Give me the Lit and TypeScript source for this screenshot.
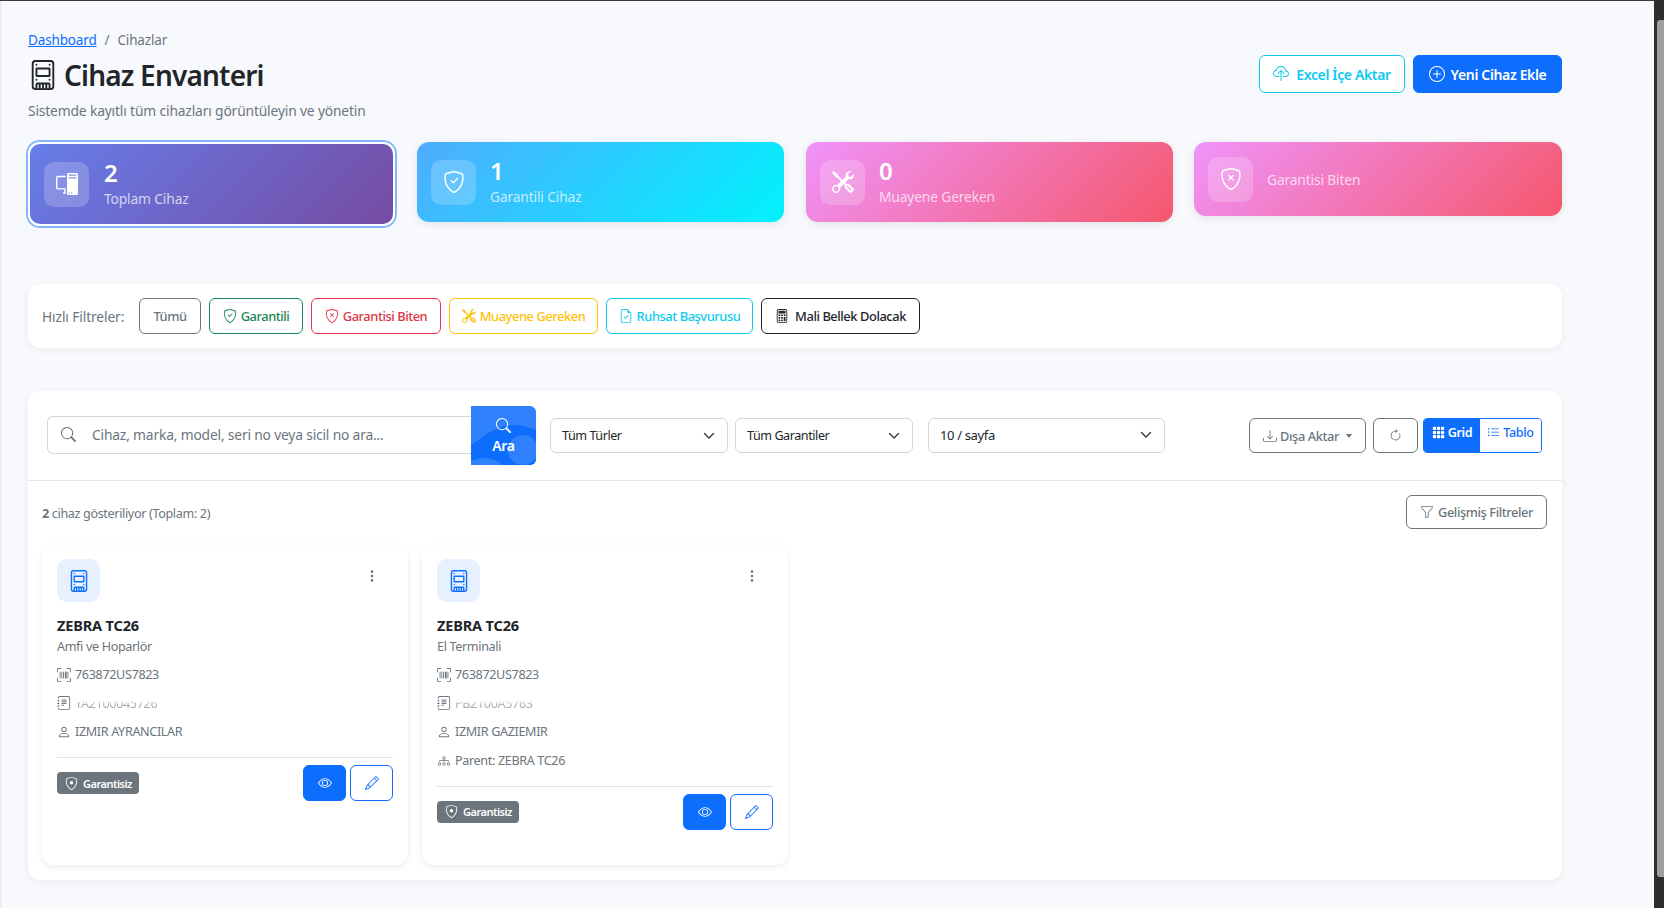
import { LitElement, html, css } from "lit";
import { customElement } from "lit/decorators.js";
import { unsafeSVG } from "lit/directives/unsafe-svg.js";

const SHIELD = `<path d="M5.338 1.59a61.44 61.44 0 0 0-2.837.856.481.481 0 0 0-.328.39c-.554 4.157.726 7.19 2.253 9.188a10.725 10.725 0 0 0 2.287 2.233c.346.244.652.42.893.533.12.057.218.095.293.118a.55.55 0 0 0 .101.025.615.615 0 0 0 .1-.025c.076-.023.174-.061.294-.118.24-.113.547-.29.893-.533a10.726 10.726 0 0 0 2.287-2.233c1.527-1.997 2.807-5.031 2.253-9.188a.48.48 0 0 0-.328-.39c-.651-.213-1.75-.56-2.837-.855C9.552 1.29 8.531 1.067 8 1.067c-.53 0-1.552.223-2.662.524zM5.072.56C6.157.265 7.31 0 8 0s1.843.265 2.928.56c1.11.3 2.229.655 2.887.87a1.54 1.54 0 0 1 1.044 1.262c.596 4.477-.787 7.795-2.465 9.99a11.775 11.775 0 0 1-2.517 2.453 7.159 7.159 0 0 1-1.048.625c-.28.132-.581.24-.829.24s-.548-.108-.829-.24a7.158 7.158 0 0 1-1.048-.625 11.777 11.777 0 0 1-2.517-2.453C1.928 10.487.545 7.169 1.141 2.692A1.54 1.54 0 0 1 2.185 1.43 62.456 62.456 0 0 1 5.072.56z"/>`;

const ICONS: Record<string, string> = {
  ssd: `<path d="M4.75 4a.75.75 0 0 0-.75.75v3.5c0 .414.336.75.75.75h6.5a.75.75 0 0 0 .75-.75v-3.5a.75.75 0 0 0-.75-.75h-6.5ZM5 8V5h6v3H5Zm0-5.5a.5.5 0 1 1-1 0 .5.5 0 0 1 1 0Zm7 0a.5.5 0 1 1-1 0 .5.5 0 0 1 1 0ZM4.5 11a.5.5 0 1 0 0-1 .5.5 0 0 0 0 1Zm7 0a.5.5 0 1 0 0-1 .5.5 0 0 0 0 1Z"/><path d="M2 2a2 2 0 0 1 2-2h8a2 2 0 0 1 2 2v12a2 2 0 0 1-2 2H4a2 2 0 0 1-2-2V2Zm11 12V2a1 1 0 0 0-1-1H4a1 1 0 0 0-1 1v12a1 1 0 0 0 1 1v-2a1 1 0 0 1 1-1h6a1 1 0 0 1 1 1v2a1 1 0 0 0 1-1Zm-7.25 1v-2H5v2h.75Zm1.75 0v-2h-.75v2h.75Zm1.75 0v-2H8.5v2h.75ZM11 13h-.75v2H11v-2Z"/>`,
  upload: `<path fill-rule="evenodd" d="M4.406 1.342A5.53 5.53 0 0 1 8 0c2.69 0 4.923 2 5.166 4.579C14.758 4.804 16 6.137 16 7.773 16 9.569 14.502 11 12.687 11H10a.5.5 0 0 1 0-1h2.688C13.979 10 15 8.988 15 7.773c0-1.216-1.02-2.228-2.313-2.228h-.5v-.5C12.188 2.825 10.328 1 8 1a4.53 4.53 0 0 0-2.941 1.1c-.757.652-1.153 1.438-1.153 2.055v.448l-.445.049C2.064 4.805 1 5.952 1 7.318 1 8.785 2.23 10 3.781 10H6a.5.5 0 0 1 0 1H3.781C1.708 11 0 9.366 0 7.318c0-1.763 1.266-3.223 2.942-3.593.143-.863.698-1.723 1.464-2.383z"/><path fill-rule="evenodd" d="M7.646 4.146a.5.5 0 0 1 .708 0l3 3a.5.5 0 0 1-.708.708L8.5 5.707V14.5a.5.5 0 0 1-1 0V5.707L5.354 7.854a.5.5 0 1 1-.708-.708l3-3z"/>`,
  plus: `<path d="M8 15A7 7 0 1 1 8 1a7 7 0 0 1 0 14zm0 1A8 8 0 1 0 8 0a8 8 0 0 0 0 16z"/><path d="M8 4a.5.5 0 0 1 .5.5v3h3a.5.5 0 0 1 0 1h-3v3a.5.5 0 0 1-1 0v-3h-3a.5.5 0 0 1 0-1h3v-3A.5.5 0 0 1 8 4z"/>`,
  pc: `<path d="M8 1a1 1 0 0 1 1-1h6a1 1 0 0 1 1 1v14a1 1 0 0 1-1 1H9a1 1 0 0 1-1-1V1Zm1 13.5a.5.5 0 1 0 1 0 .5.5 0 0 0-1 0Zm2 0a.5.5 0 1 0 1 0 .5.5 0 0 0-1 0ZM9.5 1a.5.5 0 0 0 0 1h5a.5.5 0 0 0 0-1h-5ZM9 3.5a.5.5 0 0 0 .5.5h5a.5.5 0 0 0 0-1h-5a.5.5 0 0 0-.5.5ZM1.5 2A1.5 1.5 0 0 0 0 3.5v7A1.5 1.5 0 0 0 1.5 12H6v2h-.5a.5.5 0 0 0 0 1H7v-4H1.5a.5.5 0 0 1-.5-.5v-7a.5.5 0 0 1 .5-.5H7V2H1.5Z"/>`,
  shieldCheck: SHIELD + `<path d="M10.854 5.146a.5.5 0 0 1 0 .708l-3 3a.5.5 0 0 1-.708 0l-1.5-1.5a.5.5 0 1 1 .708-.708L7.5 7.793l2.646-2.647a.5.5 0 0 1 .708 0z"/>`,
  shieldX: SHIELD + `<path d="M6.146 5.146a.5.5 0 0 1 .708 0L8 6.293l1.146-1.147a.5.5 0 1 1 .708.708L8.707 7l1.147 1.146a.5.5 0 0 1-.708.708L8 7.707 6.854 8.854a.5.5 0 1 1-.708-.708L7.293 7 6.146 5.854a.5.5 0 0 1 0-.708z"/>`,
  shieldDot: SHIELD + `<circle cx="8" cy="7" r="2.1"/>`,
  tools: `<path d="M1 0 0 1l2.2 3.081a1 1 0 0 0 .815.419h.07a1 1 0 0 1 .708.293l2.675 2.675-2.617 2.654A3.003 3.003 0 0 0 0 13a3 3 0 1 0 5.878-.851l2.654-2.617.968.968-.305.914a1 1 0 0 0 .242 1.023l3.27 3.27a.997.997 0 0 0 1.414 0l1.586-1.586a.997.997 0 0 0 0-1.414l-3.27-3.27a1 1 0 0 0-1.023-.242L10.5 9.5l-.96-.96 2.68-2.643A3.005 3.005 0 0 0 16 3c0-.269-.035-.53-.102-.777l-2.14 2.141L12 4l-.364-1.757L13.777.102a3 3 0 0 0-3.675 3.68L7.462 6.46 4.793 3.793a1 1 0 0 1-.293-.707v-.071a1 1 0 0 0-.419-.814L1 0Zm9.646 10.646a.5.5 0 0 1 .708 0l2.914 2.915a.5.5 0 0 1-.707.707l-2.915-2.914a.5.5 0 0 1 0-.708ZM3 11l.471.242.529.026.287.445.445.287.026.529L5 13l-.242.471-.026.529-.445.287-.287.445-.529.026L3 15l-.471-.242L2 14.732l-.287-.445L1.268 14l-.026-.529L1 13l.242-.471.026-.529.445-.287.287-.445.529-.026L3 11Z"/>`,
  fileCheck: `<path d="M10.854 7.854a.5.5 0 0 0-.708-.708L7.5 9.793 6.354 8.646a.5.5 0 1 0-.708.708l1.5 1.5a.5.5 0 0 0 .708 0l3-3z"/><path d="M14 14V4.5L9.5 0H4a2 2 0 0 0-2 2v12a2 2 0 0 0 2 2h8a2 2 0 0 0 2-2zM9.5 3A1.5 1.5 0 0 0 11 4.5h2V14a1 1 0 0 1-1 1H4a1 1 0 0 1-1-1V2a1 1 0 0 1 1-1h5.5v2z"/>`,
  calc: `<path d="M12 1a1 1 0 0 1 1 1v12a1 1 0 0 1-1 1H4a1 1 0 0 1-1-1V2a1 1 0 0 1 1-1h8zM4 0a2 2 0 0 0-2 2v12a2 2 0 0 0 2 2h8a2 2 0 0 0 2-2V2a2 2 0 0 0-2-2H4z"/><path d="M4 2.5a.5.5 0 0 1 .5-.5h7a.5.5 0 0 1 .5.5v2a.5.5 0 0 1-.5.5h-7a.5.5 0 0 1-.5-.5v-2zm0 4a.5.5 0 0 1 .5-.5h1a.5.5 0 0 1 .5.5v1a.5.5 0 0 1-.5.5h-1a.5.5 0 0 1-.5-.5v-1zm0 3a.5.5 0 0 1 .5-.5h1a.5.5 0 0 1 .5.5v1a.5.5 0 0 1-.5.5h-1a.5.5 0 0 1-.5-.5v-1zm0 3a.5.5 0 0 1 .5-.5h1a.5.5 0 0 1 .5.5v1a.5.5 0 0 1-.5.5h-1a.5.5 0 0 1-.5-.5v-1zm3-6a.5.5 0 0 1 .5-.5h1a.5.5 0 0 1 .5.5v1a.5.5 0 0 1-.5.5h-1a.5.5 0 0 1-.5-.5v-1zm0 3a.5.5 0 0 1 .5-.5h1a.5.5 0 0 1 .5.5v1a.5.5 0 0 1-.5.5h-1a.5.5 0 0 1-.5-.5v-1zm0 3a.5.5 0 0 1 .5-.5h1a.5.5 0 0 1 .5.5v1a.5.5 0 0 1-.5.5h-1a.5.5 0 0 1-.5-.5v-1zm3-6a.5.5 0 0 1 .5-.5h1a.5.5 0 0 1 .5.5v1a.5.5 0 0 1-.5.5h-1a.5.5 0 0 1-.5-.5v-1zm0 3a.5.5 0 0 1 .5-.5h1a.5.5 0 0 1 .5.5v4a.5.5 0 0 1-.5.5h-1a.5.5 0 0 1-.5-.5v-4z"/>`,
  search: `<path d="M11.742 10.344a6.5 6.5 0 1 0-1.397 1.398h-.001c.03.04.062.078.098.115l3.85 3.85a1 1 0 0 0 1.415-1.414l-3.85-3.85a1.007 1.007 0 0 0-.115-.1zM12 6.5a5.5 5.5 0 1 1-11 0 5.5 5.5 0 0 1 11 0z"/>`,
  download: `<path d="M.5 9.9a.5.5 0 0 1 .5.5v2.5a1 1 0 0 0 1 1h12a1 1 0 0 0 1-1v-2.5a.5.5 0 0 1 1 0v2.5a2 2 0 0 1-2 2H2a2 2 0 0 1-2-2v-2.5a.5.5 0 0 1 .5-.5z"/><path d="M7.646 11.854a.5.5 0 0 0 .708 0l3-3a.5.5 0 0 0-.708-.708L8.5 10.293V1.5a.5.5 0 0 0-1 0v8.793L5.354 8.146a.5.5 0 1 0-.708.708l3 3z"/>`,
  refresh: `<path fill-rule="evenodd" d="M8 3a5 5 0 1 0 4.546 2.914.5.5 0 0 1 .908-.417A6 6 0 1 1 8 2v1z"/><path d="M8 4.466V.534a.25.25 0 0 1 .41-.192l2.36 1.966c.12.1.12.284 0 .384L8.41 4.658A.25.25 0 0 1 8 4.466z"/>`,
  grid: `<path d="M1 2a1 1 0 0 1 1-1h2a1 1 0 0 1 1 1v2a1 1 0 0 1-1 1H2a1 1 0 0 1-1-1V2zm5 0a1 1 0 0 1 1-1h2a1 1 0 0 1 1 1v2a1 1 0 0 1-1 1H7a1 1 0 0 1-1-1V2zm5 0a1 1 0 0 1 1-1h2a1 1 0 0 1 1 1v2a1 1 0 0 1-1 1h-2a1 1 0 0 1-1-1V2zM1 7a1 1 0 0 1 1-1h2a1 1 0 0 1 1 1v2a1 1 0 0 1-1 1H2a1 1 0 0 1-1-1V7zm5 0a1 1 0 0 1 1-1h2a1 1 0 0 1 1 1v2a1 1 0 0 1-1 1H7a1 1 0 0 1-1-1V7zm5 0a1 1 0 0 1 1-1h2a1 1 0 0 1 1 1v2a1 1 0 0 1-1 1h-2a1 1 0 0 1-1-1V7zM1 12a1 1 0 0 1 1-1h2a1 1 0 0 1 1 1v2a1 1 0 0 1-1 1H2a1 1 0 0 1-1-1v-2zm5 0a1 1 0 0 1 1-1h2a1 1 0 0 1 1 1v2a1 1 0 0 1-1 1H7a1 1 0 0 1-1-1v-2zm5 0a1 1 0 0 1 1-1h2a1 1 0 0 1 1 1v2a1 1 0 0 1-1 1h-2a1 1 0 0 1-1-1v-2z"/>`,
  list: `<path fill-rule="evenodd" d="M5 11.5a.5.5 0 0 1 .5-.5h9a.5.5 0 0 1 0 1h-9a.5.5 0 0 1-.5-.5zm0-4a.5.5 0 0 1 .5-.5h9a.5.5 0 0 1 0 1h-9a.5.5 0 0 1-.5-.5zm0-4a.5.5 0 0 1 .5-.5h9a.5.5 0 0 1 0 1h-9a.5.5 0 0 1-.5-.5zm-3 1a1 1 0 1 0 0-2 1 1 0 0 0 0 2zm0 4a1 1 0 1 0 0-2 1 1 0 0 0 0 2zm0 4a1 1 0 1 0 0-2 1 1 0 0 0 0 2z"/>`,
  funnel: `<path d="M1.5 1.5A.5.5 0 0 1 2 1h12a.5.5 0 0 1 .5.5v2a.5.5 0 0 1-.128.334L10 8.692V13.5a.5.5 0 0 1-.342.474l-3 1A.5.5 0 0 1 6 14.5V8.692L1.628 3.834A.5.5 0 0 1 1.5 3.5v-2zm1 .5v1.308l4.372 4.858A.5.5 0 0 1 7 8.5v5.306l2-.666V8.5a.5.5 0 0 1 .128-.334L13.5 3.308V2h-11z"/>`,
  dots: `<path d="M9.5 13a1.5 1.5 0 1 1-3 0 1.5 1.5 0 0 1 3 0zm0-5a1.5 1.5 0 1 1-3 0 1.5 1.5 0 0 1 3 0zm0-5a1.5 1.5 0 1 1-3 0 1.5 1.5 0 0 1 3 0z"/>`,
  upc: `<path d="M1.5 1a.5.5 0 0 0-.5.5v3a.5.5 0 0 1-1 0v-3A1.5 1.5 0 0 1 1.5 0h3a.5.5 0 0 1 0 1h-3zM11 .5a.5.5 0 0 1 .5-.5h3A1.5 1.5 0 0 1 16 1.5v3a.5.5 0 0 1-1 0v-3a.5.5 0 0 0-.5-.5h-3a.5.5 0 0 1-.5-.5zM.5 11a.5.5 0 0 1 .5.5v3a.5.5 0 0 0 .5.5h3a.5.5 0 0 1 0 1h-3A1.5 1.5 0 0 1 0 14.5v-3a.5.5 0 0 1 .5-.5zm15 0a.5.5 0 0 1 .5.5v3a1.5 1.5 0 0 1-1.5 1.5h-3a.5.5 0 0 1 0-1h3a.5.5 0 0 0 .5-.5v-3a.5.5 0 0 1 .5-.5zM3 4.5a.5.5 0 0 1 1 0v7a.5.5 0 0 1-1 0v-7zm2 0a.5.5 0 0 1 1 0v7a.5.5 0 0 1-1 0v-7zm2 0a.5.5 0 0 1 1 0v7a.5.5 0 0 1-1 0v-7zm2 0a.5.5 0 0 1 .5-.5h1a.5.5 0 0 1 .5.5v7a.5.5 0 0 1-.5.5h-1a.5.5 0 0 1-.5-.5v-7zm3 0a.5.5 0 0 1 1 0v7a.5.5 0 0 1-1 0v-7z"/>`,
  journal: `<path d="M5 10.5a.5.5 0 0 1 .5-.5h2a.5.5 0 0 1 0 1h-2a.5.5 0 0 1-.5-.5zm0-2a.5.5 0 0 1 .5-.5h5a.5.5 0 0 1 0 1h-5a.5.5 0 0 1-.5-.5zm0-2a.5.5 0 0 1 .5-.5h5a.5.5 0 0 1 0 1h-5a.5.5 0 0 1-.5-.5zm0-2a.5.5 0 0 1 .5-.5h5a.5.5 0 0 1 0 1h-5a.5.5 0 0 1-.5-.5z"/><path d="M3 0h10a2 2 0 0 1 2 2v12a2 2 0 0 1-2 2H3a2 2 0 0 1-2-2v-1h1v1a1 1 0 0 0 1 1h10a1 1 0 0 0 1-1V2a1 1 0 0 0-1-1H3a1 1 0 0 0-1 1v1H1V2a2 2 0 0 1 2-2z"/><path d="M1 5v-.5a.5.5 0 0 1 1 0V5h.5a.5.5 0 0 1 0 1h-2a.5.5 0 0 1 0-1H1zm0 3v-.5a.5.5 0 0 1 1 0V8h.5a.5.5 0 0 1 0 1h-2a.5.5 0 0 1 0-1H1zm0 3v-.5a.5.5 0 0 1 1 0v.5h.5a.5.5 0 0 1 0 1h-2a.5.5 0 0 1 0-1H1z"/>`,
  person: `<path d="M8 8a3 3 0 1 0 0-6 3 3 0 0 0 0 6Zm2-3a2 2 0 1 1-4 0 2 2 0 0 1 4 0Zm4 8c0 1-1 1-1 1H3s-1 0-1-1 1-4 6-4 6 3 6 4Zm-1-.004c-.001-.246-.154-.986-.832-1.664C11.516 10.68 10.289 10 8 10c-2.29 0-3.516.68-4.168 1.332-.678.678-.83 1.418-.832 1.664h10Z"/>`,
  diagram: `<path fill-rule="evenodd" d="M6 3.5A1.5 1.5 0 0 1 7.5 2h1A1.5 1.5 0 0 1 10 3.5v1A1.5 1.5 0 0 1 8.5 6v1H14a.5.5 0 0 1 .5.5v1a.5.5 0 0 1-1 0V8h-5v.5a.5.5 0 0 1-1 0V8h-5v.5a.5.5 0 0 1-1 0v-1A.5.5 0 0 1 2 7h5.5V6A1.5 1.5 0 0 1 6 4.5v-1zM8.5 5a.5.5 0 0 0 .5-.5v-1a.5.5 0 0 0-.5-.5h-1a.5.5 0 0 0-.5.5v1a.5.5 0 0 0 .5.5h1zM0 11.5A1.5 1.5 0 0 1 1.5 10h1A1.5 1.5 0 0 1 4 11.5v1A1.5 1.5 0 0 1 2.5 14h-1A1.5 1.5 0 0 1 0 12.5v-1zm1.5-.5a.5.5 0 0 0-.5.5v1a.5.5 0 0 0 .5.5h1a.5.5 0 0 0 .5-.5v-1a.5.5 0 0 0-.5-.5h-1zm4.5.5A1.5 1.5 0 0 1 7.5 10h1a1.5 1.5 0 0 1 1.5 1.5v1A1.5 1.5 0 0 1 8.5 14h-1A1.5 1.5 0 0 1 6 12.5v-1zm1.5-.5a.5.5 0 0 0-.5.5v1a.5.5 0 0 0 .5.5h1a.5.5 0 0 0 .5-.5v-1a.5.5 0 0 0-.5-.5h-1zm4.5.5a1.5 1.5 0 0 1 1.5-1.5h1a1.5 1.5 0 0 1 1.5 1.5v1a1.5 1.5 0 0 1-1.5 1.5h-1a1.5 1.5 0 0 1-1.5-1.5v-1zm1.5-.5a.5.5 0 0 0-.5.5v1a.5.5 0 0 0 .5.5h1a.5.5 0 0 0 .5-.5v-1a.5.5 0 0 0-.5-.5h-1z"/>`,
  eye: `<path d="M16 8s-3-5.5-8-5.5S0 8 0 8s3 5.5 8 5.5S16 8 16 8zM1.173 8a13.133 13.133 0 0 1 1.66-2.043C4.12 4.668 5.88 3.5 8 3.5c2.12 0 3.879 1.168 5.168 2.457A13.133 13.133 0 0 1 14.828 8c-.058.087-.122.183-.195.288-.335.48-.83 1.12-1.465 1.755C11.879 11.332 10.119 12.5 8 12.5c-2.12 0-3.879-1.168-5.168-2.457A13.134 13.134 0 0 1 1.172 8z"/><path d="M8 5.5a2.5 2.5 0 1 0 0 5 2.5 2.5 0 0 0 0-5zM4.5 8a3.5 3.5 0 1 1 7 0 3.5 3.5 0 0 1-7 0z"/>`,
  pencil: `<path d="M12.146.146a.5.5 0 0 1 .708 0l3 3a.5.5 0 0 1 0 .708l-10 10a.5.5 0 0 1-.168.11l-5 2a.5.5 0 0 1-.65-.65l2-5a.5.5 0 0 1 .11-.168l10-10zM11.207 2.5 13.5 4.793 14.793 3.5 12.5 1.207 11.207 2.5zm1.586 3L10.5 3.207 4 9.707V10h.5a.5.5 0 0 1 .5.5v.5h.5a.5.5 0 0 1 .5.5v.5h.293l6.5-6.5zm-9.761 5.175-.106.106-1.528 3.821 3.821-1.528.106-.106A.5.5 0 0 1 5 12.5V12h-.5a.5.5 0 0 1-.5-.5V11h-.5a.5.5 0 0 1-.468-.325z"/>`,
};

const icon = (name: string, size: number) =>
  html`<svg class="bi" width=${size} height=${size} viewBox="0 0 16 16" fill="currentColor">${unsafeSVG(ICONS[name])}</svg>`;

const chevron = html`<svg class="chev" width="16" height="16" viewBox="0 0 16 16"><path fill="none" stroke="#343a40" stroke-linecap="round" stroke-linejoin="round" stroke-width="1.4" d="m3.5 5.5 4.5 4.5 4.5-4.5"/></svg>`;

interface Device {
  type: string;
  serial: string;
  secret: string;
  owner: string;
  parent?: string;
}

const DEVICES: Device[] = [
  { type: "Amfi ve Hoparlör", serial: "763872US7823", secret: "YA2100045726", owner: "IZMIR AYRANCILAR" },
  { type: "El Terminali", serial: "763872US7823", secret: "PB2100A5763", owner: "IZMIR GAZIEMIR", parent: "Parent: ZEBRA TC26" },
];

@customElement("app-root")
export class AppRoot extends LitElement {
  static styles = css`
    :host {
      display: block;
      font-family: "Noto Sans", "Open Sans", sans-serif;
      color: #212529;
      font-size: 14px;
      letter-spacing: -0.35px;
    }
    * { box-sizing: border-box; }
    svg.bi { display: block; flex: none; }
    .frame { display: grid; grid-template-columns: 1fr 10px; height: 908px; overflow: hidden; }
    .page {
      background: #f8f9fc;
      border-top: 1px solid #3a3a3a;
      box-shadow: inset 2px 0 2px -1px #e4e4e6;
      padding: 29px 92px 0 28px;
      min-width: 0;
    }
    .scroll { background: #2e2e2e; padding: 20px 0 31px 3px; }
    .thumb { height: 100%; background: #a0a0a0; border-radius: 3px 0 0 3px; }

    .head { display: flex; justify-content: space-between; align-items: center; }
    .crumb { display: flex; gap: 8px; line-height: 21px; font-size: 13.5px; color: #6c757d; letter-spacing: -0.15px; }
    .crumb a { color: #0d6efd; text-decoration: underline; }
    .title { display: flex; align-items: center; gap: 6px; margin: 5px 0 6px; font-size: 28px; font-weight: 600; line-height: 38px; letter-spacing: -0.8px; }
    .sub { line-height: 21px; font-size: 13.8px; color: #6c757d; letter-spacing: -0.15px; }
    .actions { display: flex; gap: 8px; margin-bottom: 3px; }
    .btn {
      display: flex; align-items: center; justify-content: center;
      border: 1px solid; border-radius: 6px; background: transparent;
      font: inherit; letter-spacing: inherit;
    }
    .import { width: 146px; height: 38px; gap: 7px; color: #0dcaf0; border-color: #0dcaf0; background: #fff; font-weight: 600; }
    .new { width: 149px; height: 38px; gap: 6px; color: #fff; background: #0d6efd; border-color: #0d6efd; font-weight: 600; }

    .stats { display: grid; grid-template-columns: repeat(4, 367px); gap: 22px; align-items: start; margin-top: 21px; width: 1534px; }
    .stat { display: flex; align-items: center; gap: 14px; padding: 14.5px 14px; border-radius: 12px; color: #fff; box-shadow: 0 2px 8px rgba(0,0,0,.09); }
    .stat:last-child { margin-left: -1px; }
    .stat.focus { border: 2px solid #fff; box-shadow: 0 0 0 2px #86b7fe; background-origin: border-box; gap: 15px; }
    .g1 { background: linear-gradient(135deg, #667eea, #764ba2); }
    .g2 { background: linear-gradient(135deg, #4facfe, #00f2fe); }
    .g3 { background: linear-gradient(135deg, #f093fb, #f5576c); }
    .stat-icon { width: 45px; height: 45px; border-radius: 10px; background: rgba(255,255,255,.2); display: grid; place-items: center; flex: none; }
    .num { font-size: 24px; font-weight: 600; line-height: 29px; margin: -1px 0 1px; }
    .lbl { font-size: 13.8px; line-height: 22px; color: rgba(255,255,255,.72); letter-spacing: -0.15px; }
    .lbl.solo { margin-top: 1px; }

    .quick { display: flex; align-items: center; gap: 8px; margin-top: 58px; width: 1534px; height: 64px; padding: 0 14px; background: #fff; border-radius: 12px; box-shadow: 0 2px 8px rgba(0,0,0,.06); }
    .quick .cap { width: 89px; color: #6c757d; font-size: 13.8px; letter-spacing: -0.12px; }
    .qb { height: 36px; gap: 4px; font-size: 12.9px; font-weight: 500; letter-spacing: -0.45px; }
    .qb.sec { width: 62px; color: #6c757d; border-color: #6c757d; }
    .qb.suc { width: 94px; color: #198754; border-color: #198754; }
    .qb.dan { width: 130px; color: #dc3545; border-color: #dc3545; }
    .qb.war { width: 149px; color: #ffc107; border-color: #ffc107; }
    .qb.inf { width: 147px; color: #0dcaf0; border-color: #0dcaf0; }
    .qb.dar { width: 159px; color: #212529; border-color: #212529; gap: 6px; }

    .main { margin-top: 43px; width: 1534px; height: 489px; background: #fff; border-radius: 12px; box-shadow: 0 2px 8px rgba(0,0,0,.06); }
    .bar { display: flex; align-items: center; height: 90px; padding: 0 20px 0 19px; border-bottom: 1px solid #e6e7ef; }
    .search { display: flex; align-items: center; width: 489px; }
    .input { display: flex; align-items: center; flex: 1; height: 38px; margin-bottom: 2px; border: 1px solid #d5d5e0; border-right: 0; border-radius: 6px 0 0 6px; padding-left: 13px; gap: 16px; color: #6c757d; font-size: 13.8px; letter-spacing: -0.17px; }
    .ara { position: relative; overflow: hidden; width: 65px; height: 59px; border: 0; border-radius: 0 6px 6px 0; background: #2f81fe; color: #fff; font: inherit; font-weight: 600; letter-spacing: inherit; display: flex; flex-direction: column; align-items: center; justify-content: center; gap: 3px; padding: 2px 0 0; }
    .ara svg.wave { position: absolute; inset: 0; }
    .ara .fg { position: relative; }
    .sel { display: flex; align-items: center; justify-content: space-between; height: 35px; border: 1px solid #d5d5e0; border-radius: 6px; background: #fff; padding: 0 10px 0 11px; font-size: 12.6px; color: #212529; letter-spacing: -0.45px; }
    .s1 { width: 178px; margin-left: 14px; }
    .s2 { width: 178px; margin-left: 7px; }
    .s3 { width: 237px; margin-left: 15px; font-size: 13px; letter-spacing: -0.35px; padding-bottom: 1px; }
    .gray { color: #6c757d; border-color: #6c757d; background: #fff; font-size: 12.8px; font-weight: 500; letter-spacing: -0.4px; }
    .export { width: 117px; height: 35px; gap: 3px; margin-left: auto; }
    .caret { width: 0; height: 0; margin-left: 4px; border-top: 4px solid #6c757d; border-left: 3.5px solid transparent; border-right: 3.5px solid transparent; }
    .refresh { width: 45px; height: 35px; margin-left: 7px; }
    .toggle { display: flex; height: 35px; margin-left: 5px; border: 1px solid #0d6efd; border-radius: 4px; overflow: hidden; font-size: 12.6px; font-weight: 600; }
    .toggle div { display: flex; align-items: center; justify-content: center; gap: 3px; padding-bottom: 7px; }
    .on { width: 56px; background: #0d6efd; color: #fff; }
    .off { width: 61px; background: #fff; color: #0d6efd; font-weight: 500; }

    .count-row { display: flex; justify-content: space-between; align-items: center; padding: 14px 15px 0 14px; }
    .count { font-size: 12.6px; color: #6c757d; padding-top: 2px; }
    .adv { width: 141px; height: 34px; gap: 4px; }

    .devices { display: grid; grid-template-columns: repeat(2, 366px); gap: 14px; margin: 16px 0 0 14px; height: 320px; }
    .dev { display: flex; flex-direction: column; padding: 14px 15px; background: #fff; border-radius: 12px; box-shadow: 0 2px 6px rgba(0,0,0,.08); }
    .dev-top { display: flex; justify-content: space-between; }
    .dev-icon { width: 43px; height: 43px; border-radius: 10px; background: #e7f0ff; color: #0d6efd; display: grid; place-items: center; }
    .kebab { color: #6c757d; margin: 10px 14px 0 0; }
    .name { margin-top: 11px; font-size: 14.5px; font-weight: 700; line-height: 24px; letter-spacing: -0.15px; }
    .type { font-size: 12.6px; line-height: 19px; color: #6c757d; margin-bottom: 4.5px; }
    .row { display: flex; align-items: center; gap: 4px; height: 28.6px; font-size: 12.6px; color: #6c757d; }
    .row .ic { width: 14px; display: grid; place-items: center; }
    .redact { opacity: .6; filter: blur(.6px); -webkit-mask-image: linear-gradient(#0000 32%, #000 58%); mask-image: linear-gradient(#0000 32%, #000 58%); }
    .foot { display: flex; justify-content: space-between; align-items: center; margin-top: 11px; padding-top: 7px; border-top: 1px solid #dee2e6; }
    .badge { display: flex; align-items: center; gap: 5px; height: 22px; padding: 0 7px 0 8px; background: #6c757d; color: #fff; border-radius: 4px; font-size: 11px; font-weight: 600; letter-spacing: -0.5px; }
    .foot .btns { display: flex; gap: 4px; }
    .act { width: 43px; height: 36px; border-color: #0d6efd; }
    .act.view { background: #0d6efd; color: #fff; }
    .act.edit { color: #0d6efd; background: #fff; }
  `;

  private device(d: Device) {
    return html`
      <article class="dev">
        <div class="dev-top">
          <div class="dev-icon">${icon("ssd", 22)}</div>
          <div class="kebab">${icon("dots", 14)}</div>
        </div>
        <div class="name">ZEBRA TC26</div>
        <div class="type">${d.type}</div>
        <div class="row"><span class="ic">${icon("upc", 14)}</span><span>${d.serial}</span></div>
        <div class="row"><span class="ic">${icon("journal", 14)}</span><span class="redact">${d.secret}</span></div>
        <div class="row"><span class="ic">${icon("person", 14)}</span><span>${d.owner}</span></div>
        ${d.parent ? html`<div class="row"><span class="ic">${icon("diagram", 12)}</span><span>${d.parent}</span></div>` : ""}
        <div class="foot">
          <span class="badge">${icon("shieldDot", 13)}Garantisiz</span>
          <div class="btns">
            <button class="btn act view">${icon("eye", 14)}</button>
            <button class="btn act edit">${icon("pencil", 14)}</button>
          </div>
        </div>
      </article>
    `;
  }

  render() {
    return html`
      <div class="frame">
        <main class="page">
          <header class="head">
            <div>
              <nav class="crumb"><a>Dashboard</a><span>/</span><span>Cihazlar</span></nav>
              <h1 class="title">${icon("ssd", 30)}Cihaz Envanteri</h1>
              <div class="sub">Sistemde kayıtlı tüm cihazları görüntüleyin ve yönetin</div>
            </div>
            <div class="actions">
              <button class="btn import">${icon("upload", 16)}Excel İçe Aktar</button>
              <button class="btn new">${icon("plus", 16)}Yeni Cihaz Ekle</button>
            </div>
          </header>

          <section class="stats">
            <div class="stat focus g1">
              <div class="stat-icon">${icon("pc", 22)}</div>
              <div><div class="num">2</div><div class="lbl">Toplam Cihaz</div></div>
            </div>
            <div class="stat g2">
              <div class="stat-icon">${icon("shieldCheck", 22)}</div>
              <div><div class="num">1</div><div class="lbl">Garantili Cihaz</div></div>
            </div>
            <div class="stat g3">
              <div class="stat-icon">${icon("tools", 22)}</div>
              <div><div class="num">0</div><div class="lbl">Muayene Gereken</div></div>
            </div>
            <div class="stat g3">
              <div class="stat-icon">${icon("shieldX", 22)}</div>
              <div><div class="lbl solo">Garantisi Biten</div></div>
            </div>
          </section>

          <section class="quick">
            <span class="cap">Hızlı Filtreler:</span>
            <button class="btn qb sec">Tümü</button>
            <button class="btn qb suc">${icon("shieldCheck", 14)}Garantili</button>
            <button class="btn qb dan">${icon("shieldX", 14)}Garantisi Biten</button>
            <button class="btn qb war">${icon("tools", 14)}Muayene Gereken</button>
            <button class="btn qb inf">${icon("fileCheck", 14)}Ruhsat Başvurusu</button>
            <button class="btn qb dar">${icon("calc", 14)}Mali Bellek Dolacak</button>
          </section>

          <section class="main">
            <div class="bar">
              <div class="search">
                <div class="input">${icon("search", 15)}<span>Cihaz, marka, model, seri no veya sicil no ara...</span></div>
                <button class="ara">
                  <svg class="wave" width="65" height="59" viewBox="0 0 65 59">
                    <path fill="#0d6efd" d="M0 39C12 31 26 19 40 19C50 19 58 21 65 24V59H0Z"/>
                    <circle cx="52" cy="44" r="15" fill="#2f81fe"/>
                    <path fill="#2f81fe" d="M0 59V55C10 50 20 50 32 59Z"/>
                  </svg>
                  <span class="fg">${icon("search", 15)}</span>
                  <span class="fg">Ara</span>
                </button>
              </div>
              <div class="sel s1"><span>Tüm Türler</span>${chevron}</div>
              <div class="sel s2"><span>Tüm Garantiler</span>${chevron}</div>
              <div class="sel s3"><span>10 / sayfa</span>${chevron}</div>
              <button class="btn gray export">${icon("download", 14)}Dışa Aktar<span class="caret"></span></button>
              <button class="btn gray refresh">${icon("refresh", 13)}</button>
              <div class="toggle">
                <div class="on">${icon("grid", 13)}Grid</div>
                <div class="off">${icon("list", 13)}Tablo</div>
              </div>
            </div>
            <div class="count-row">
              <span class="count"><b>2</b> cihaz gösteriliyor (Toplam: 2)</span>
              <button class="btn gray adv">${icon("funnel", 14)}Gelişmiş Filtreler</button>
            </div>
            <div class="devices">${DEVICES.map((d) => this.device(d))}</div>
          </section>
        </main>
        <aside class="scroll"><div class="thumb"></div></aside>
      </div>
    `;
  }
}
